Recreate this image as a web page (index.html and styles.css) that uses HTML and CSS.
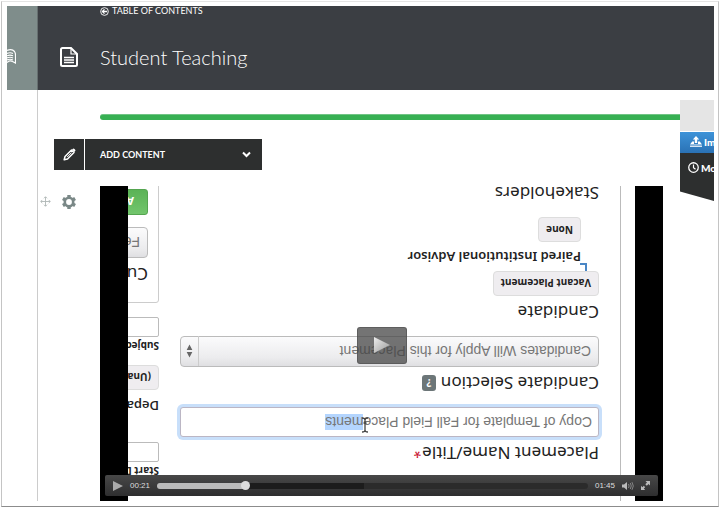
FILE: index.html
```html
<!DOCTYPE html>
<html lang="en">
<head>
    <meta charset="UTF-8">
    <meta name="viewport" content="width=device-width, initial-scale=1.0">
    <title>Student Teaching</title>
    <link rel="stylesheet" href="styles.css">
</head>
<body>

    <div class="window">
        <div class="screen">

            <!-- Page header -->
            <header class="header">
                <div class="header-side">
                    <svg class="icon-book" viewBox="0 0 9 15" width="9" height="15">
                        <path d="M0 1.500Q5-.5 7.500 2.500Q8.500 4 8.500 6V14L5.500 12.500Q3 11 0 13.500M0 4.500Q3 3 6 4.500M0 6.800Q3 5.300 6 6.800M0 9Q3 7.500 6 9M0 11Q3 9.500 6 11" fill="none" stroke="#fff" stroke-width="1.200"/>
                    </svg>
                </div>
                <div class="header-main">
                    <a class="toc-link" href="#">
                        <svg viewBox="0 0 10 10" width="9" height="9">
                            <circle cx="5" cy="5" r="4.300" fill="none" stroke="#fff"/>
                            <path d="M8 5H2.800M5 2.600L2.600 5L5 7.400" fill="none" stroke="#fff" stroke-width="1.400"/>
                        </svg>
                        <span>TABLE OF CONTENTS</span>
                    </a>
                    <svg class="icon-page" viewBox="0 0 18 20" width="18" height="20">
                        <path d="M2.500 1H11L17 7V17.500Q17 19 15.500 19H2.500Q1 19 1 17.500V2.500Q1 1 2.500 1Z" fill="none" stroke="#fff" stroke-width="2"/>
                        <path d="M11 1.500V7H16.500" fill="none" stroke="#fff" stroke-width="1.200"/>
                        <path d="M4 10.500H14M4 13H14M4 15.500H14" stroke="#fff" stroke-width="1.300"/>
                    </svg>
                    <h1>Student Teaching</h1>
                </div>
            </header>

            <div class="main">
                <div class="rail"></div>

                <main class="content">
                    <div class="progress"></div>

                    <div class="toolbar">
                        <button class="edit-btn" aria-label="Edit">
                            <svg viewBox="0 0 13 13" width="13" height="13">
                                <path d="M1.200 11.800L2 8.500L8.500 2L11 4.500L4.500 11Z" fill="none" stroke="#fff" stroke-width="1.500" stroke-linejoin="round"/>
                                <path d="M9 1.500L10 .7Q10.800.3 11.500 1L12.200 1.700Q12.800 2.500 12.200 3.100L11.400 4Z" fill="#fff"/>
                                <path d="M4.200 9L8.500 4.600" stroke="#fff"/>
                            </svg>
                        </button>
                        <button class="add-btn">
                            <span>ADD CONTENT</span>
                            <svg viewBox="0 0 9 7" width="9" height="7">
                                <path d="M1 1.500L4.500 5L8 1.500" fill="none" stroke="#fff" stroke-width="2"/>
                            </svg>
                        </button>
                    </div>

                    <div class="block">
                        <div class="block-tools">
                            <svg viewBox="0 0 12 12" width="11" height="11">
                                <path d="M6 1V11M1 6H11M4.300 2.500L6 .8L7.700 2.500M4.300 9.500L6 11.200L7.700 9.500M2.500 4.300L.8 6L2.500 7.700M9.500 4.300L11.200 6L9.500 7.700" fill="none" stroke="#b0b8b7"/>
                            </svg>
                            <svg viewBox="0 0 14 14" width="14" height="14">
                                <circle cx="7" cy="7" r="4.200" fill="none" stroke="#7a8887" stroke-width="2.600"/>
                                <path d="M7 0V2.500M7 11.500V14M.9 3.500L3.100 4.800M10.900 9.200L13.100 10.500M.9 10.500L3.100 9.200M10.900 4.800L13.100 3.500" stroke="#7a8887" stroke-width="3.400"/>
                            </svg>
                        </div>

                        <div class="player">
                            <!-- The recording is upside down -->
                            <div class="frame">
                                <div class="form">
                                    <label class="title" for="placementName">Placement Name/Title<span class="required">*</span></label>
                                    <div class="name-field">
                                        <input type="text" id="placementName" value="Copy of Template for Fall Field Placements">
                                        <svg class="cursor" viewBox="0 0 8 16" width="8" height="16">
                                            <path d="M1 1Q4 1 4 3V13Q4 15 1 15M7 1Q4 1 4 3M4 13Q4 15 7 15M2.500 10H5.500" fill="none" stroke="#444" stroke-width="1.300"/>
                                        </svg>
                                    </div>
                                    <div class="title-row">
                                        <label class="title" for="candidateSelect">Candidate Selection</label>
                                        <button class="help">?</button>
                                    </div>
                                    <div class="select-wrap">
                                        <select id="candidateSelect">
                                            <option>Candidates Will Apply for this Placement</option>
                                        </select>
                                        <svg class="select-arrows" viewBox="0 0 18 30" width="18" height="30">
                                            <path d="M9 8L12 14H6ZM9 22L12 16H6Z" fill="#666"/>
                                        </svg>
                                    </div>
                                    <h2 class="title">Candidate</h2>
                                    <button class="chip">Vacant Placement</button>
                                    <div class="paired">
                                        <svg class="corner" viewBox="0 0 7 8" width="7" height="8">
                                            <path d="M1 0V7H7" fill="none" stroke="#4a86c5" stroke-width="2"/>
                                        </svg>
                                        <h3>Paired Institutional Advisor</h3>
                                        <button class="chip">None</button>
                                    </div>
                                    <h2 class="title">Stakeholders</h2>
                                </div>

                                <div class="aside">
                                    <label class="small" for="startDate">Start D</label>
                                    <input type="text" class="short" id="startDate">
                                    <h3 class="department">Depa</h3>
                                    <button class="chip wide">(Una</button>
                                    <label class="small subject" for="subject">Subjec</label>
                                    <input type="text" class="short" id="subject">
                                    <div class="panel">
                                        <label class="title" for="term">Cu</label>
                                        <select id="term"><option>Fe</option></select>
                                        <button class="green">A</button>
                                    </div>
                                </div>
                            </div>

                            <button class="big-play" aria-label="Play video">
                                <svg viewBox="0 0 18 18" width="18" height="18">
                                    <defs>
                                        <linearGradient id="shine" x1="0" y1="0" x2="1" y2="1">
                                            <stop offset="0" stop-color="#eee"/>
                                            <stop offset="1" stop-color="#999"/>
                                        </linearGradient>
                                    </defs>
                                    <path d="M1 1L17 9L1 17Z" fill="url(#shine)"/>
                                </svg>
                            </button>

                            <div class="controls">
                                <button aria-label="Play">
                                    <svg viewBox="0 0 10 10" width="10" height="10"><path d="M0 0L10 5L0 10Z" fill="#aaa"/></svg>
                                </button>
                                <span class="time">00:21</span>
                                <input type="range" class="seek" min="0" max="105" value="21" aria-label="Seek">
                                <span class="time">01:45</span>
                                <button aria-label="Mute">
                                    <svg viewBox="0 0 12 8" width="12" height="8">
                                        <path d="M0 2.500H2L5 0V8L2 5.500H0Z" fill="#bbb"/>
                                        <path d="M6.500 2Q7.700 4 6.500 6M8.300 1Q10.200 4 8.300 7M10 .2Q12.600 4 10 7.800" fill="none" stroke="#999" stroke-width=".8"/>
                                    </svg>
                                </button>
                                <button aria-label="Full screen">
                                    <svg viewBox="0 0 9 9" width="9" height="9">
                                        <path d="M4.500 0H9V4.500L7.500 3L5.800 4.700L4.300 3.200L6 1.500ZM4.200 9H0V4.800L1.400 6.200L2.800 4.800L4.200 6.200L2.800 7.600Z" fill="#bbb"/>
                                    </svg>
                                </button>
                            </div>
                        </div>
                    </div>
                </main>

                <aside class="drawer">
                    <div class="drawer-top"></div>
                    <a class="drawer-blue" href="#">
                        <svg viewBox="0 0 12 11" width="12" height="11">
                            <path d="M6 0L9.200 3.500H7.200V7H4.800V3.500H2.800Z" fill="#fff"/>
                            <path d="M0 8.500L2.200 5.500H4V8H8V5.500H9.800L12 8.500Z" fill="#fff"/>
                            <path d="M0 10.200H12" stroke="#fff" stroke-width="1.200"/>
                        </svg>
                        <span>Im</span>
                    </a>
                    <a class="drawer-dark" href="#">
                        <svg viewBox="0 0 12 12" width="11" height="11">
                            <circle cx="6" cy="6" r="5.200" fill="none" stroke="#fff" stroke-width="1.400"/>
                            <path d="M6 2.800V6.300L8.200 8" fill="none" stroke="#fff" stroke-width="1.300"/>
                        </svg>
                        <span>Mo</span>
                    </a>
                </aside>
            </div>
        </div>
    </div>

    <script>
        // Select the end of the placement name
        const nameInput = document.getElementById('placementName');
        nameInput.focus({ preventScroll: true });
        nameInput.setSelectionRange(nameInput.value.length - 5, nameInput.value.length);
    </script>

</body>
</html>
```
FILE: styles.css
```css
* {
    box-sizing: border-box;
}

body {
    margin: 1px 2px 2px 1px;
    background-color: #fff;
    font-family: Lato, sans-serif;
    color: #222;
}

h1, h2, h3 {
    margin: 0;
    font-weight: 400;
}

button, input, select {
    margin: 0;
    padding: 0;
    border: 0;
    font-family: inherit;
    color: inherit;
}

a {
    color: #fff;
    text-decoration: none;
}

svg {
    flex: none;
    display: block;
}

/* Window with a soft edge */
.window {
    padding: 4px 4px 5px 5px;
    background-color: #fff;
    border: 1px solid #c4c4c4;
    border-top-color: #e4e4e4;
    border-bottom-color: #8c8c8c;
    box-shadow: 0 1px 2px #bbb;
}

.screen {
    overflow: hidden;
}

/* Header */
.header {
    display: grid;
    grid-template-columns: 31px 1fr;
    height: 84px;
    background-color: #3b3e43;
}

.header-side {
    display: flex;
    align-items: center;
    padding-top: 16px;
    background-color: #7f8d8b;
    border-right: 1px solid #666f70;
}

.header-main {
    display: grid;
    grid-template-columns: 40px 1fr;
    grid-template-rows: 10px 1fr;
    align-items: center;
    padding: 0 0 0 22px;
    color: #fff;
}

.toc-link {
    grid-column: 2;
    display: flex;
    align-items: center;
    gap: 3px;
    font-size: 9px;
    line-height: 10px;
}

.icon-page {
    margin-top: 8px;
}

.header h1 {
    padding-top: 8px;
    font-size: 20px;
    font-weight: 300;
    line-height: 24px;
}

/* Main area */
.main {
    display: grid;
    grid-template-columns: 31px minmax(0, 1fr) 34px;
}

.rail {
    border-right: 1px solid #ccc;
}

.content {
    padding-top: 24px;
}

.progress {
    height: 6px;
    margin-left: 62px;
    background-color: #37b053;
    border-top: 1px solid #71c485;
    border-radius: 3px 0 0 3px;
}

.toolbar {
    display: flex;
    gap: 1px;
    margin: 19px 0 16px 16px;
}

.toolbar button {
    display: flex;
    align-items: center;
    height: 31px;
    background-color: #2d2f2f;
    color: #fff;
}

.toolbar .edit-btn {
    width: 30px;
    justify-content: center;
}

.toolbar .add-btn {
    width: 177px;
    padding: 0 11px 0 15px;
    justify-content: space-between;
    font-size: 9px;
    font-weight: 700;
}

.block {
    display: grid;
    grid-template-columns: 62px minmax(0, 1fr);
    padding-right: 17px;
}

.block-tools {
    display: flex;
    align-items: center;
    gap: 11px;
    height: 31px;
    padding-left: 2px;
}

/* Video player */
.player {
    position: relative;
    height: 315px;
    padding: 0 28px;
    background-color: #000;
}

.frame {
    display: grid;
    grid-template-columns: 419px 1fr;
    column-gap: 21px;
    height: 100%;
    padding-left: 36px;
    overflow: hidden;
    transform: rotate(180deg);
    background: linear-gradient(to right, transparent 14px, #bbb 14px, #bbb 15px, transparent 15px) #fff;
    font-family: "Open Sans", sans-serif;
    white-space: nowrap;
}

.form {
    display: flex;
    flex-direction: column;
    align-items: flex-start;
    padding-top: 36px;
}

.title {
    font-family: "Noto Sans", sans-serif;
    font-size: 17px;
    line-height: 24px;
}

.form > .title, .title-row {
    margin-bottom: 4px;
}

.required {
    margin-left: 1px;
    color: #c8102e;
    font-size: 14px;
    line-height: 16px;
}

.name-field, .select-wrap {
    position: relative;
    width: 100%;
    margin-bottom: 12px;
}

.name-field input {
    display: block;
    width: 100%;
    height: 30px;
    padding: 0 6px;
    border: 1px solid #bbb6c4;
    border-radius: 3px;
    outline: none;
    box-shadow: 0 0 0 3px #c8dffa;
    font-family: "Liberation Sans", sans-serif;
    font-size: 14px;
    color: #777;
}

.name-field input::selection {
    background-color: #b4d5fe;
    color: #777;
}

.cursor {
    position: absolute;
    left: 230px;
    top: 4px;
}

.title-row {
    display: flex;
    align-items: center;
    gap: 5px;
}

.help {
    width: 14px;
    height: 16px;
    border-radius: 3px;
    background-color: #6c7678;
    color: #fff;
    font-size: 10px;
    font-weight: 700;
    line-height: 16px;
}

select {
    appearance: none;
    display: block;
    width: 100%;
    height: 31px;
    padding: 0 7px;
    border: 1px solid #bbb;
    border-radius: 4px;
    background: linear-gradient(#dfdfe2, #ececee 30%, #fbfbfc);
    font-family: "Liberation Sans", sans-serif;
    font-size: 14px;
    color: #777;
}

.select-arrows {
    position: absolute;
    right: 1px;
    top: 1px;
    border-left: 1px solid #ccc;
}

.chip {
    height: 25px;
    padding: 0 7px;
    border: 1px solid #ddd;
    border-radius: 4px;
    background-color: #efedf0;
    font-size: 10px;
    font-weight: 700;
}

.form > .chip {
    margin-bottom: 4px;
}

.paired {
    position: relative;
    padding-left: 18px;
    margin-bottom: 12px;
}

.paired h3 {
    margin-bottom: 4px;
    font-family: "Noto Sans", sans-serif;
    font-size: 13px;
    font-weight: 600;
    line-height: 20px;
}

.corner {
    position: absolute;
    left: 12px;
    top: -4px;
}

/* Second column of the recorded form, cut off by the frame */
.aside {
    display: flex;
    flex-direction: column;
    width: 120px;
    padding-top: 22px;
}

.small {
    font-size: 10px;
    font-weight: 700;
    line-height: 16px;
}

.short {
    height: 20px;
    margin-top: 1px;
    border: 1px solid #bbb;
    border-radius: 2px;
}

.department {
    margin: 24px 0 4px;
    font-size: 13px;
    font-weight: 600;
    line-height: 24px;
}

.chip.wide {
    text-align: left;
}

.subject {
    margin-top: 11px;
}

.panel {
    display: flex;
    flex-direction: column;
    height: 140px;
    margin-top: 14px;
    padding: 16px 10px 0;
    border: 1px solid #ccc;
    border-radius: 3px;
}

.panel .title {
    margin-bottom: 4px;
}

.green {
    flex: none;
    height: 26px;
    margin-top: 12px;
    padding-left: 13px;
    border: 1px solid #55a550;
    border-radius: 3px;
    background: linear-gradient(#72c56c, #5bb356);
    color: #fff;
    font-size: 11px;
    font-weight: 700;
    text-align: left;
}

/* Player buttons over the picture */
.big-play {
    position: absolute;
    top: calc(50% - 17px);
    left: calc(50% - 25px);
    display: flex;
    align-items: center;
    justify-content: center;
    width: 50px;
    height: 37px;
    border: 1px solid rgba(80, 80, 80, 0.6);
    border-radius: 3px;
    background-color: rgba(70, 70, 70, 0.75);
}

.controls {
    position: absolute;
    left: 5px;
    right: 5px;
    bottom: 5px;
    display: flex;
    align-items: center;
    gap: 7px;
    height: 21px;
    padding: 0 8px;
    border-radius: 2px;
    background: linear-gradient(#484848, #2e2e2f);
}

.controls button {
    background: none;
}

.time {
    color: #ddd;
    font-family: "Liberation Sans", sans-serif;
    font-size: 8px;
}

.seek {
    appearance: none;
    flex: 1;
    min-width: 0;
    height: 6px;
    border-radius: 3px;
    background: linear-gradient(to right, #bbb 20%, #1c1c1c 20%, #1c1c1c 48%, #2b2b2b 48%);
}

.seek::-webkit-slider-thumb {
    appearance: none;
    width: 9px;
    height: 9px;
    border-radius: 50%;
    background-color: #ddd;
}

/* Drawer at the right edge */
.drawer {
    padding-top: 10px;
    overflow: hidden;
    font-size: 10px;
    font-weight: 900;
}

.drawer-top {
    height: 31px;
    margin-bottom: 1px;
    background-color: #e5e5e5;
}

.drawer a {
    display: flex;
    gap: 2px;
    line-height: 12px;
}

.drawer-blue {
    height: 21px;
    padding: 4px 0 0 10px;
    background: linear-gradient(#3d92d8, #2a72b5);
}

.drawer-dark {
    height: 48px;
    padding: 9px 0 0 8px;
    background-color: #2d2f2f;
    clip-path: polygon(0 0, 100% 0, 100% 100%, 0 80%);
}
```
